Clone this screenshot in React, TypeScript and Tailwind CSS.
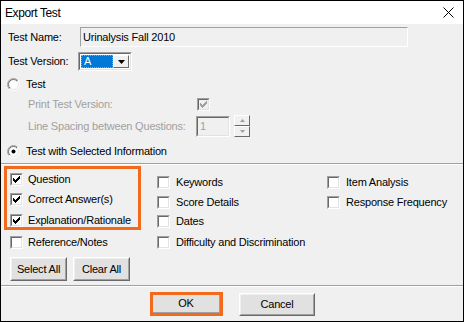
import React from "react";

const font = "font-['Liberation_Sans',Arial,sans-serif] text-[11px] tracking-[-0.2px] leading-none";

function Check({ checked, disabled }: { checked?: boolean; disabled?: boolean }) {
  const cols = [2, 3, 4, 3, 2, 1, 0];
  return (
    <div className="w-[13px] h-[13px] shrink-0 border border-t-[#a0a0a0] border-l-[#a0a0a0] border-b-white border-r-white">
      <div
        className={`w-full h-full flex items-center justify-center border border-t-[#696969] border-l-[#696969] border-b-[#e3e3e3] border-r-[#e3e3e3] ${
          disabled ? "bg-[#f0f0f0]" : "bg-white"
        }`}
      >
        {checked && (
          <svg width="7" height="7" viewBox="0 0 7 7" shapeRendering="crispEdges">
            {cols.map((y, x) => (
              <rect key={x} x={x} y={y} width="1" height="3" fill={disabled ? "#a0a0a0" : "#000"} />
            ))}
          </svg>
        )}
      </div>
    </div>
  );
}

function Radio({ id, on }: { id: string; on?: boolean }) {
  return (
    <svg width="13" height="13" viewBox="0 0 13 13" className="shrink-0">
      <defs>
        <linearGradient id={id + "o"} x1="0" y1="0" x2="1" y2="1">
          <stop offset="0.5" stopColor="#a0a0a0" />
          <stop offset="0.5" stopColor="#ffffff" />
        </linearGradient>
        <linearGradient id={id + "i"} x1="0" y1="0" x2="1" y2="1">
          <stop offset="0.5" stopColor="#696969" />
          <stop offset="0.5" stopColor="#e3e3e3" />
        </linearGradient>
      </defs>
      <circle cx="6.5" cy="6.5" r="6" fill="none" stroke={`url(#${id}o)`} strokeWidth="1" />
      <circle cx="6.5" cy="6.5" r="5" fill="#fff" stroke={`url(#${id}i)`} strokeWidth="1" />
      {on && <circle cx="6.5" cy="6.5" r="2" fill="#000" />}
    </svg>
  );
}

function Btn({ label, w, h }: { label: string; w: string; h: string }) {
  return (
    <div className={`${w} ${h} border border-t-white border-l-white border-b-[#696969] border-r-[#696969] bg-[#e1e1e1]`}>
      <div className="w-full h-full flex items-center justify-center border border-t-[#f0f0f0] border-l-[#f0f0f0] border-b-[#a0a0a0] border-r-[#a0a0a0] text-black">
        {label}
      </div>
    </div>
  );
}

function Row({ label, checked, gap = "gap-[5px]" }: { label: string; checked?: boolean; gap?: string }) {
  return (
    <div className={`flex items-center h-[14px] ${gap}`}>
      <Check checked={checked} />
      <span>{label}</span>
    </div>
  );
}

function Spin({ up }: { up?: boolean }) {
  return (
    <div className="w-[16px] h-[11px] border border-t-white border-l-white border-b-[#696969] border-r-[#696969] bg-[#f0f0f0] flex items-center justify-center">
      <svg width="5" height="3" viewBox="0 0 5 3">
        <path d={up ? "M2.5 0 L5 3 L0 3 Z" : "M0 0 L5 0 L2.5 3 Z"} fill="#a0a0a0" />
      </svg>
    </div>
  );
}

export default function App() {
  return (
    <div className={`w-[464px] h-[322px] border border-black bg-[#f0f0f0] flex flex-col text-black ${font}`}>
      {/* title bar */}
      <div className="h-[23px] bg-white flex items-center justify-between pl-[4px] pr-[9px] shrink-0">
        <span className="text-[12px] tracking-[-0.4px]">Export Test</span>
        <svg width="11" height="11" viewBox="0 0 11 11">
          <path d="M0.5 0.5 L10.5 10.5 M10.5 0.5 L0.5 10.5" stroke="#000" strokeWidth="1" />
        </svg>
      </div>

      {/* top settings */}
      <div className="pl-[7px] flex flex-col">
        <div className="mt-[3px] h-[20px] flex items-center">
          <span className="w-[72px]">Test Name:</span>
          <div className="w-[328px] h-[20px] border border-t-[#a0a0a0] border-l-[#a0a0a0] border-b-white border-r-white flex items-center pl-[2px]">
            Urinalysis Fall 2010
          </div>
        </div>

        <div className="mt-[5px] h-[19px] flex items-center">
          <span className="w-[70px]">Test Version:</span>
          <div className="w-[54px] h-[19px] border border-t-[#a0a0a0] border-l-[#a0a0a0] border-b-white border-r-white">
            <div className="w-full h-full border border-t-[#696969] border-l-[#696969] border-b-[#e3e3e3] border-r-[#e3e3e3] bg-white flex p-[1px]">
              <div className="flex-1 bg-[#0078d7] text-white flex items-center pl-[2px] border border-dotted border-[#6ab0ee]">A</div>
              <div className="w-[16px] border border-t-white border-l-white border-b-[#696969] border-r-[#696969] bg-[#f0f0f0] flex items-center justify-center">
                <svg width="7" height="4" viewBox="0 0 7 4">
                  <path d="M0 0 H7 L3.5 4 Z" fill="#000" />
                </svg>
              </div>
            </div>
          </div>
        </div>

        <div className="mt-[4px] h-[18px] flex items-center gap-[6px] ml-[-1px]">
          <Radio id="r1" />
          <span>Test</span>
        </div>

        <div className="mt-[2px] h-[18px] flex items-center pl-[20px] text-[#a0a0a0]">
          <span className="w-[169px]">Print Test Version:</span>
          <Check checked disabled />
        </div>

        <div className="mt-[3px] h-[21px] flex items-center pl-[20px] text-[#a0a0a0]">
          <span className="w-[168px]">Line Spacing between Questions:</span>
          <div className="w-[34px] h-[21px] border border-t-[#a0a0a0] border-l-[#a0a0a0] border-b-white border-r-white">
            <div className="w-full h-full border border-t-[#696969] border-l-[#696969] border-b-[#e3e3e3] border-r-[#e3e3e3] flex items-center pl-[2px]">
              1
            </div>
          </div>
          <div className="ml-[4px] flex flex-col mt-[-1px]">
            <Spin up />
            <Spin />
          </div>
        </div>

        <div className="mt-[5px] h-[18px] flex items-center gap-[6px] ml-[-1px]">
          <Radio id="r2" on />
          <span>Test with Selected Information</span>
        </div>
      </div>

      <div className="mt-[3px] h-px bg-[#a0a0a0] shrink-0" />
      <div className="h-px bg-white shrink-0" />

      {/* checkbox section */}
      <div className="h-[120px] flex shrink-0">
        <div className="ml-[3px] w-[137px] flex flex-col">
          <div className="mt-[1px] h-[64px] border-[3px] border-[#f26b1d] pl-[3px] pt-[3px] flex flex-col">
            <Row label="Question" checked />
            <div className="mt-[6px]">
              <Row label="Correct Answer(s)" checked />
            </div>
            <div className="mt-[7px]">
              <Row label="Explanation/Rationale" checked />
            </div>
          </div>
          <div className="mt-[5px] pl-[6px]">
            <Row label="Reference/Notes" />
          </div>
          <div className="mt-[8px] ml-[6px] flex gap-[6px]">
            <Btn label="Select All" w="w-[57px]" h="h-[24px]" />
            <Btn label="Clear All" w="w-[57px]" h="h-[24px]" />
          </div>
        </div>

        <div className="ml-[16px] w-[170px] flex flex-col pt-[10px]">
          <Row label="Keywords" gap="gap-[6px]" />
          <div className="mt-[6px]">
            <Row label="Score Details" gap="gap-[6px]" />
          </div>
          <div className="mt-[5px]">
            <Row label="Dates" gap="gap-[6px]" />
          </div>
          <div className="mt-[7px]">
            <Row label="Difficulty and Discrimination" gap="gap-[6px]" />
          </div>
        </div>

        <div className="flex flex-col pt-[10px]">
          <Row label="Item Analysis" gap="gap-[6px]" />
          <div className="mt-[6px]">
            <Row label="Response Frequency" gap="gap-[6px]" />
          </div>
        </div>
      </div>

      <div className="h-px bg-[#a0a0a0] shrink-0" />
      <div className="h-px bg-white shrink-0" />

      {/* footer */}
      <div className="flex items-start pl-[149px] mt-[5px]">
        <div className="w-[73px] h-[24px] border-[3px] border-[#f26b1d] bg-[#e1e1e1]">
          <div className="w-full h-full flex items-center justify-center border-r border-b border-[#a0a0a0]">OK</div>
        </div>
        <div className="ml-[16px] mt-[1px]">
          <Btn label="Cancel" w="w-[76px]" h="h-[23px]" />
        </div>
      </div>
    </div>
  );
}
